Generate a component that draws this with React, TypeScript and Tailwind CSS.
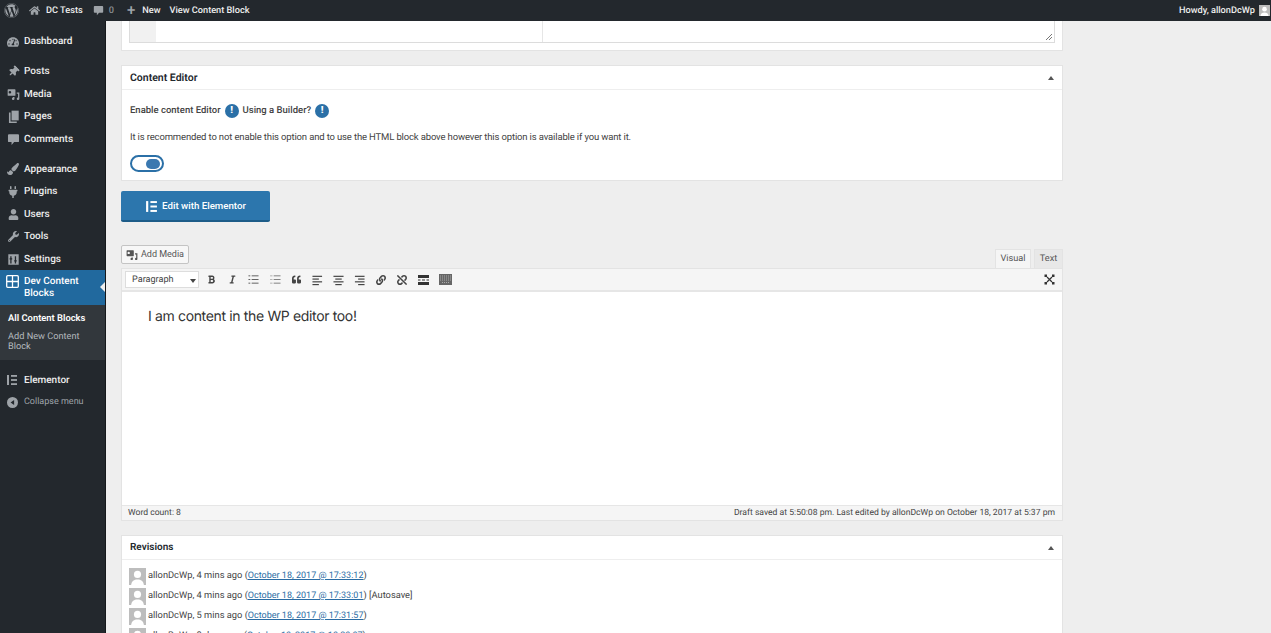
import React from 'react';
import { FaWordpress, FaHome, FaThumbtack, FaTachometerAlt, FaPlug, FaUser, FaWrench, FaPaintBrush, FaBold, FaItalic, FaQuoteLeft, FaLink, FaUnlink } from 'react-icons/fa';

const Bubble = ({ size = 13 }: { size?: number }) => (
  <svg width={size} height={size} viewBox="0 0 20 20" fill="currentColor"><path d="M3 2h14a1.5 1.5 0 0 1 1.5 1.5v9A1.5 1.5 0 0 1 17 14h-6l-4 4.5V14H3a1.5 1.5 0 0 1-1.5-1.5v-9A1.5 1.5 0 0 1 3 2z" /></svg>
);

const MediaIcon = ({ size = 13 }: { size?: number }) => (
  <svg width={size} height={size} viewBox="0 0 20 20" fill="currentColor">
    <path fillRule="evenodd" d="M2 2h10a1 1 0 0 1 1 1v8a1 1 0 0 1-1 1H2a1 1 0 0 1-1-1V3a1 1 0 0 1 1-1zm2.5 2.5a2 2 0 1 0 0 4 2 2 0 0 0 0-4z" />
    <path d="M15 7h4v9.5a2 2 0 1 1-2-2V9h-2zM9 14h2.5v2.5a2 2 0 1 1-2-2z" />
  </svg>
);

const PagesIcon = () => (
  <svg width={13} height={13} viewBox="0 0 20 20" fill="currentColor">
    <path d="M7 1h11v15H7z" /><path d="M3 4h2.5v13.5H15V20H3z" />
  </svg>
);

const SettingsIcon = () => (
  <svg width={13} height={13} viewBox="0 0 20 20" fill="currentColor" fillRule="evenodd">
    <path d="M2 2h16v16H2zM5 5v3H4v2h1v6h2v-6h1V8H7V5zm7 0v6h-1v2h1v3h2v-3h1v-2h-1V5z" />
  </svg>
);

const BlocksIcon = () => (
  <svg width={13} height={13} viewBox="0 0 13 13" fill="none" stroke="currentColor" strokeWidth="1.3">
    <rect x="0.7" y="0.7" width="11.6" height="11.6" rx="1" /><path d="M6.5 1v11M1 6.5h11" />
  </svg>
);

const ElementorIcon = ({ size = 12 }: { size?: number }) => (
  <svg width={size} height={size} viewBox="0 0 12 12" fill="currentColor">
    <rect x="1" y="1" width="2" height="10" /><rect x="5" y="1" width="6" height="1.8" /><rect x="5" y="5.1" width="6" height="1.8" /><rect x="5" y="9.2" width="6" height="1.8" />
  </svg>
);

const CollapseIcon = () => (
  <svg width={11} height={11} viewBox="0 0 20 20"><circle cx="10" cy="10" r="10" fill="currentColor" /><path d="M13 5.5v9L6.5 10z" fill="#23282d" /></svg>
);

const Info = () => (
  <span className="flex h-[14px] w-[14px] shrink-0 items-center justify-center rounded-full bg-[#2b70a7] text-[10px] font-black leading-none text-white">!</span>
);

const Avatar = ({ className }: { className: string }) => (
  <span className={`block shrink-0 overflow-hidden bg-[#bdbdbd] ${className}`}>
    <svg viewBox="0 0 20 20" className="h-full w-full" fill="#fff"><circle cx="10" cy="7.5" r="4.2" /><path d="M2.5 20c.5-4.5 3.5-6.5 7.5-6.5s7 2 7.5 6.5z" /></svg>
  </span>
);

const Lines = ({ ys }: { ys: [number, number, number][] }) => (
  <svg width={12} height={12} viewBox="0 0 12 12" stroke="#444" strokeWidth="1.3">
    {ys.map(([y, a, b]) => <line key={y} x1={a} x2={b} y1={y} y2={y} />)}
  </svg>
);

const ListIcon = ({ numbered }: { numbered?: boolean }) => (
  <svg width={11} height={11} viewBox="0 0 12 12" stroke={numbered ? '#777' : '#555'} strokeWidth="1">
    {[2, 6, 10].map(y => <g key={y}><line x1="0.5" x2="2.5" y1={y} y2={y} strokeDasharray={numbered ? '1 0.4' : undefined} /><line x1="4" x2="11.5" y1={y} y2={y} /></g>)}
  </svg>
);

const menuTop = [{ label: 'Dashboard', icon: <FaTachometerAlt size={12} /> }];
const menuContent = [
  { label: 'Posts', icon: <FaThumbtack size={11} className="rotate-45" /> },
  { label: 'Media', icon: <MediaIcon /> },
  { label: 'Pages', icon: <PagesIcon /> },
  { label: 'Comments', icon: <Bubble /> },
];
const menuAdmin = [
  { label: 'Appearance', icon: <FaPaintBrush size={12} /> },
  { label: 'Plugins', icon: <FaPlug size={12} /> },
  { label: 'Users', icon: <FaUser size={11} /> },
  { label: 'Tools', icon: <FaWrench size={11} /> },
  { label: 'Settings', icon: <SettingsIcon /> },
];

const MenuItem = ({ label, icon }: { label: string; icon: React.ReactNode }) => (
  <div className="flex h-[22.5px] items-center text-[#eeeeee]">
    <span className="flex w-[24px] justify-center pl-[2px] text-[#9ea3a8]">{icon}</span>
    <span>{label}</span>
  </div>
);

const revisions = [
  { who: 'allonDcWp, 4 mins ago', date: 'October 18, 2017 @ 17:33:12', extra: '' },
  { who: 'allonDcWp, 4 mins ago', date: 'October 18, 2017 @ 17:33:01', extra: ' [Autosave]' },
  { who: 'allonDcWp, 5 mins ago', date: 'October 18, 2017 @ 17:31:57', extra: '' },
  { who: 'allonDcWp, 8 days ago', date: 'October 10, 2017 @ 10:30:07', extra: '' },
];

const App: React.FC = () => {
  return (
    <div className="flex h-[633px] w-[1271px] flex-col overflow-hidden bg-[#eeeeee] font-['Roboto','Liberation_Sans',sans-serif] text-[9.5px] tracking-[-0.15px] text-[#444] [text-rendering:geometricPrecision]">
      {/* admin bar */}
      <header className="flex h-[21px] shrink-0 items-center justify-between bg-[#23282d] text-[9.2px] tracking-normal text-[#eeeeee]">
        <div className="flex items-center font-medium">
          <FaWordpress size={15} className="ml-[4px] text-[#9ea3a8]" />
          <FaHome size={11} className="ml-[10px] text-[#9ea3a8]" />
          <span className="ml-[6px]">DC Tests</span>
          <span className="ml-[10px] text-[#9ea3a8]"><Bubble size={11} /></span>
          <span className="ml-[5px] text-[#8a8f94]">0</span>
          <span className="ml-[13px] text-[15px] leading-none text-[#9ea3a8]">+</span>
          <span className="ml-[7px]">New</span>
          <span className="ml-[9px]">View Content Block</span>
        </div>
        <div className="flex items-center gap-[4px] pr-[1px] font-medium">
          <span>Howdy, allonDcWp</span>
          <Avatar className="h-[11px] w-[11px]" />
        </div>
      </header>

      <div className="flex min-h-0 flex-1">
        {/* sidebar */}
        <aside className="flex w-[106px] shrink-0 flex-col border-r border-[#15181b] bg-[#23282d] pt-[9.3px] text-[10px] font-medium tracking-normal">
          {menuTop.map(m => <MenuItem key={m.label} {...m} />)}
          <div className="h-[7.5px]" />
          {menuContent.map(m => <MenuItem key={m.label} {...m} />)}
          <div className="h-[7.5px]" />
          {menuAdmin.map(m => <MenuItem key={m.label} {...m} />)}
          <div className="relative flex h-[35px] bg-[#21699e] text-white">
            <span className="flex w-[24px] justify-center pl-[1px] pt-[5px]"><BlocksIcon /></span>
            <span className="pt-[6px] leading-[12px]">Dev Content<br />Blocks</span>
            <span className="absolute right-0 top-[12px] h-0 w-0 border-y-[5px] border-r-[5px] border-y-transparent border-r-[#eeeeee]" />
          </div>
          <div className="flex h-[55px] flex-col bg-[#32373c] pl-[8px] pt-[9px] text-[9.4px] leading-[10px]">
            <span className="font-semibold text-white">All Content Blocks</span>
            <span className="mt-[8px] text-[9.2px] font-normal text-[#b4b9be]">Add New Content<br />Block</span>
          </div>
          <div className="mt-[8.7px] flex h-[22.5px] items-center text-[#eeeeee]">
            <span className="flex w-[24px] justify-center text-[#9ea3a8]"><ElementorIcon /></span>
            <span>Elementor</span>
          </div>
          <div className="flex h-[22.5px] items-center font-normal text-[#9ea3a8]">
            <span className="flex w-[24px] justify-center"><CollapseIcon /></span>
            <span className="text-[9px]">Collapse menu</span>
          </div>
        </aside>

        {/* main column */}
        <main className="ml-[15px] flex w-[942px] shrink-0 flex-col">
          <section className="h-[30px] shrink-0 border border-t-0 border-[#e3e3e3] bg-white px-[7px]">
            <div className="flex h-[22px] border border-t-0 border-[#dcdcdc]">
              <div className="w-[26px] bg-[#f1f1f1]" />
              <div className="w-[387px] border-r border-[#e6e6e6]" />
              <div className="relative flex-1">
                <svg width="7" height="7" viewBox="0 0 7 7" className="absolute bottom-[2px] right-[2px]" stroke="#777"><path d="M1 7l6-6M4 7l3-3" /></svg>
              </div>
            </div>
          </section>

          <section className="mt-[14px] h-[116px] shrink-0 border border-[#e3e3e3] bg-white">
            <div className="flex h-[24px] items-center justify-between border-b border-[#eeeeee] pl-[8px] pr-[8px]">
              <span className="text-[10.5px] font-semibold tracking-normal text-[#23282d]">Content Editor</span>
              <span className="h-0 w-0 border-x-[3px] border-b-[4px] border-x-transparent border-b-[#555]" />
            </div>
            <div className="pl-[8px] pt-[14px]">
              <div className="flex items-center font-medium tracking-normal">
                <span>Enable content Editor</span>
                <span className="ml-[4px]"><Info /></span>
                <span className="ml-[4px]">Using a Builder?</span>
                <span className="ml-[4px]"><Info /></span>
              </div>
              <p className="mt-[13px] leading-[14px]">It is recommended to not enable this option and to use the HTML block above however this option is available if you want it.</p>
              <div className="mt-[10px] flex h-[17px] w-[34px] items-center justify-end rounded-full border-2 border-[#2b70a7] bg-white pr-[2px]">
                <span className="h-[10px] w-[14px] rounded-full bg-[#3a78b0]" />
              </div>
            </div>
          </section>

          <button className="mt-[10px] flex h-[31px] w-[149px] shrink-0 items-center justify-center gap-[4px] rounded-[2px] border-b-2 border-[#1d5c88] bg-[#2c76ad] pt-[2px] text-[9.7px] font-medium tracking-normal text-white">
            <ElementorIcon size={13} />
            <span>Edit with Elementor</span>
          </button>

          <div className="mt-[23px] flex h-[23px] shrink-0 items-start justify-between">
            <button className="flex h-[19px] w-[68px] items-center justify-center gap-[3px] rounded-[2px] border border-[#c4c4c4] bg-[#f7f7f7] text-[9px] tracking-normal text-[#555]">
              <MediaIcon size={12} />
              <span>Add Media</span>
            </button>
            <div className="flex h-[23px] items-end gap-[3px] text-[9.2px] tracking-normal">
              <span className="flex h-[19px] w-[36px] items-center justify-center border border-b-0 border-[#e3e3e3] bg-[#f5f5f5] text-[#555]">Visual</span>
              <span className="flex h-[19px] w-[29px] items-center justify-center border border-b-0 border-[#e3e3e3] bg-[#e8e8e8] text-[#555]">Text</span>
            </div>
          </div>

          <section className="shrink-0 border border-[#e3e3e3]">
            <div className="flex h-[23px] items-center justify-between border-b-2 border-[#e6e6e6] bg-[#f5f5f5] pl-[3px] pr-[7px]">
              <div className="flex items-center">
                <div className="flex h-[17px] w-[74px] items-center justify-between border border-[#dddddd] bg-white pl-[6px] pr-[2px] pt-[2px] text-[9.1px] tracking-normal text-[#444]">
                  <span>Paragraph</span>
                  <span className="h-0 w-0 border-x-[3px] border-t-[4px] border-x-transparent border-t-[#444]" />
                </div>
                <div className="ml-[7px] flex items-center gap-[10.2px] text-[#444]">
                  <span className="flex w-[11px] justify-center"><FaBold size={9} /></span>
                  <span className="flex w-[11px] justify-center"><FaItalic size={9} /></span>
                  <span className="flex w-[11px] justify-center"><ListIcon /></span>
                  <span className="flex w-[11px] justify-center"><ListIcon numbered /></span>
                  <span className="flex w-[11px] justify-center"><FaQuoteLeft size={9} /></span>
                  <span className="flex w-[11px] justify-center"><Lines ys={[[2, 0.5, 11], [5, 0.5, 7.5], [8, 0.5, 11], [11, 0.5, 7.5]]} /></span>
                  <span className="flex w-[11px] justify-center"><Lines ys={[[2, 0.5, 11.5], [5, 2.5, 9.5], [8, 0.5, 11.5], [11, 2.5, 9.5]]} /></span>
                  <span className="flex w-[11px] justify-center"><Lines ys={[[2, 1, 11.5], [5, 4.5, 11.5], [8, 1, 11.5], [11, 4.5, 11.5]]} /></span>
                  <span className="flex w-[11px] justify-center"><FaLink size={10} /></span>
                  <span className="flex w-[11px] justify-center"><FaUnlink size={10} /></span>
                  <svg width={11} height={10} viewBox="0 0 11 10" fill="#333"><rect width="11" height="3" /><rect y="7" width="11" height="3" /><rect x="0" y="4.5" width="2.5" height="1" /><rect x="4" y="4.5" width="3" height="1" /><rect x="8.5" y="4.5" width="2.5" height="1" /></svg>
                  <svg width={13} height={11} viewBox="0 0 13 11"><rect width="13" height="11" fill="#666" /><path d="M1 2h11M1 4h11M1 6h11M3 8.5h7" stroke="#bbb" strokeWidth="0.8" strokeDasharray="1 1" /></svg>
                </div>
              </div>
              <svg width={11} height={11} viewBox="0 0 11 11" stroke="#333" strokeWidth="1.2" fill="#333">
                <path d="M3 3l5 5M8 3l-5 5" fill="none" />
                <rect x="0.5" y="0.5" width="2.5" height="2.5" stroke="none" /><rect x="8" y="0.5" width="2.5" height="2.5" stroke="none" /><rect x="0.5" y="8" width="2.5" height="2.5" stroke="none" /><rect x="8" y="8" width="2.5" height="2.5" stroke="none" />
              </svg>
            </div>
            <div className="h-[213px] bg-white pl-[26px] pt-[15px] font-['Inter',sans-serif] text-[14px] leading-[20px] tracking-[-0.35px] text-[#333]">
              I am content in the WP editor too!
            </div>
            <div className="flex h-[15px] items-center justify-between border-t border-[#e6e6e6] bg-[#f5f5f5] pl-[6px] pr-[7px] text-[8.6px] tracking-normal text-[#444]">
              <span>Word count: 8</span>
              <span>Draft saved at 5:50:08 pm. Last edited by allonDcWp on October 18, 2017 at 5:37 pm</span>
            </div>
          </section>

          <section className="mt-[14px] h-[120px] shrink-0 border border-b-0 border-[#e3e3e3] bg-white">
            <div className="flex h-[24px] items-center justify-between border-b border-[#eeeeee] px-[8px]">
              <span className="text-[10px] font-semibold tracking-normal text-[#23282d]">Revisions</span>
              <span className="h-0 w-0 border-x-[3px] border-b-[4px] border-x-transparent border-b-[#555]" />
            </div>
            <div className="flex flex-col gap-[3px] pl-[7px] pt-[8px] text-[9.3px] tracking-normal">
              {revisions.map(r => (
                <div key={r.date} className="flex h-[17px] items-center gap-[2px]">
                  <Avatar className="h-[17px] w-[17px]" />
                  <span>
                    {r.who} (<a href="#" className="text-[9px] text-[#2b6ca3] underline">{r.date}</a>){r.extra}
                  </span>
                </div>
              ))}
            </div>
          </section>
        </main>
      </div>
    </div>
  );
};

export default App;
